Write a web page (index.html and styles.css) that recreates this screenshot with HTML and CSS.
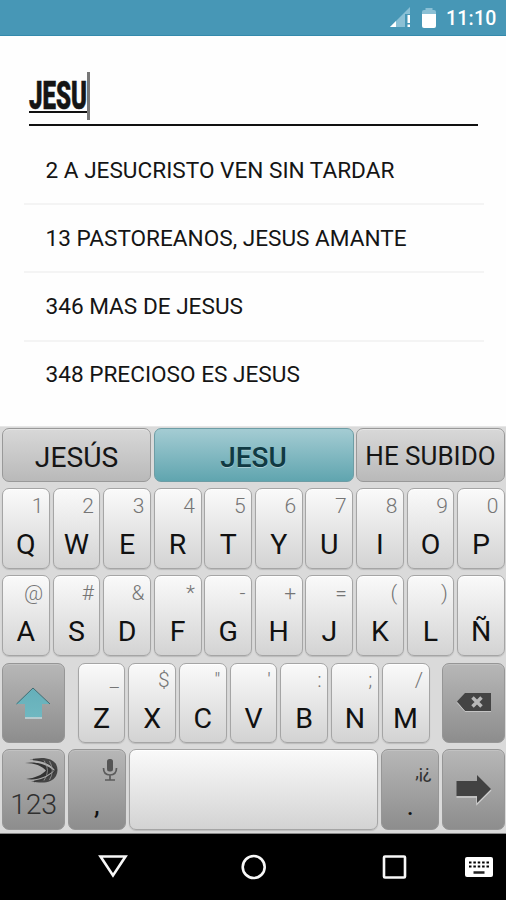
FILE: index.html
```html
<!DOCTYPE html>
<html lang="es">
<head>
<meta charset="utf-8">
<title>Buscar</title>
<link rel="stylesheet" href="styles.css">
</head>
<body>
<header class="status">
  <svg class="signal" width="24" height="22" viewBox="0 0 24 22"><path d="M1 20L21 0V7H16V20Z" fill="#8bc0d5"/><path d="M1 20L7 14V20Z" fill="#fff"/><path d="M18.500 8h2.500v8h-2.500zM18.500 17.500h2.500v2.500h-2.500z" fill="#fff"/></svg>
  <svg class="battery" width="14" height="22" viewBox="0 0 14 22"><path d="M0 5Q0 3 2 3H3.500V1H10.500V3H12Q14 3 14 5V8H0Z" fill="#8bc0d5"/><path d="M0 7H14V19Q14 21 12 21H2Q0 21 0 19Z" fill="#fff"/></svg>
  <span class="clock">11:10</span>
</header>
<main class="page">
  <div class="search"><span class="query"><span class="typed">JESU</span></span><span class="caret"></span></div>
  <ul class="results">
    <li>2 A JESUCRISTO VEN SIN TARDAR</li>
    <li>13 PASTOREANOS, JESUS AMANTE</li>
    <li>346 MAS DE JESUS</li>
    <li>348 PRECIOSO ES JESUS</li>
  </ul>
</main>
<section class="keyboard">
  <div class="suggestions">
    <div class="word">JESÚS</div>
    <div class="word active">JESU</div>
    <div class="word phrase">HE SUBIDO</div>
  </div>
  <div class="row">
    <div class="key"><small>1</small><b>Q</b></div><div class="key"><small>2</small><b>W</b></div><div class="key"><small>3</small><b>E</b></div><div class="key"><small>4</small><b>R</b></div><div class="key"><small>5</small><b>T</b></div><div class="key"><small>6</small><b>Y</b></div><div class="key"><small>7</small><b>U</b></div><div class="key"><small>8</small><b>I</b></div><div class="key"><small>9</small><b>O</b></div><div class="key"><small>0</small><b>P</b></div>
  </div>
  <div class="row">
    <div class="key"><small>@</small><b>A</b></div><div class="key"><small>#</small><b>S</b></div><div class="key"><small>&amp;</small><b>D</b></div><div class="key"><small>*</small><b>F</b></div><div class="key"><small>-</small><b>G</b></div><div class="key"><small>+</small><b>H</b></div><div class="key"><small>=</small><b>J</b></div><div class="key"><small>(</small><b>K</b></div><div class="key"><small>)</small><b>L</b></div><div class="key"><small></small><b>Ñ</b></div>
  </div>
  <div class="row third">
    <div class="key dark wide">
      <svg width="63" height="80" viewBox="0 0 63 80"><defs><linearGradient id="teal" x1="0" y1="0" x2="0" y2="1"><stop offset="0" stop-color="#65afb9"/><stop offset="1" stop-color="#70b8c1"/></linearGradient></defs><path d="M31 25L48 41H40V54.500H23V41H14Z" fill="url(#teal)"/><path d="M14.500 41L31 25L48 41" fill="none" stroke="#456c72" stroke-width="1"/><path d="M23 55H40" stroke="#c6d9dc" stroke-width="1.500"/></svg>
    </div>
    <div class="letters">
      <div class="key"><small>_</small><b>Z</b></div><div class="key"><small>$</small><b>X</b></div><div class="key"><small>"</small><b>C</b></div><div class="key"><small>'</small><b>V</b></div><div class="key"><small>:</small><b>B</b></div><div class="key"><small>;</small><b>N</b></div><div class="key"><small>/</small><b>M</b></div>
    </div>
    <div class="key dark wide">
      <svg width="63" height="80" viewBox="0 0 63 80"><path d="M15 38.500L23 30H49V48H23Z" fill="#444"/><path d="M15 39.500L23 48.500H49" fill="none" stroke="#c4c4c4"/><path d="M30.500 34.500L39.500 43.500M39.500 34.500L30.500 43.500" stroke="#b8b8b8" stroke-width="3.500"/></svg>
    </div>
  </div>
  <div class="row fourth">
    <div class="key dark wide mode">
      <svg width="34" height="27" viewBox="0 0 34 27"><path d="M4 3C17-1 27 1 31 7Q34 13 31 19C27 26 17 27 6 24C15 24 23 22 27 17L30 13L27 9C23 4 14 2 4 3Z" fill="#444"/><path d="M0 6C12 4 22 8 29 13.500C22 19 13 24 1 22C10 21 17 18 21 13.500C17 9 10 6 0 6Z" fill="#333"/><path d="M8 2.500C18 3 26 7 31 13C26 20 18 23 9 24.500" fill="none" stroke="#3a3a3a" stroke-width="1.500"/><path d="M19 3.500Q26 13.500 19 23.500M24.500 4Q30 13.500 24.500 23" fill="none" stroke="#999" stroke-width="0.800"/></svg>
      <b>123</b>
    </div>
    <div class="key dark comma">
      <svg width="16" height="24" viewBox="0 0 16 24"><rect x="5" y="1" width="6" height="12.500" rx="2.500" fill="#555"/><path d="M1.500 10Q1.500 17 8 17Q14.500 17 14.500 10M8 17V22M3 22H13" fill="none" stroke="#5c5c5c" stroke-width="1.700"/></svg>
      <b>,</b>
    </div>
    <div class="key space"></div>
    <div class="key dark dot"><small>,¡¿</small><b>.</b></div>
    <div class="key dark wide">
      <svg width="63" height="80" viewBox="0 0 63 80"><path d="M14.500 48H35V55L49 41" fill="none" stroke="#ccc" stroke-width="1.500"/><path d="M14.500 32H35V26L49 40L35 54V47H14.500Z" fill="#424242"/></svg>
    </div>
  </div>
</section>
<nav class="navbar">
  <svg width="506" height="66" viewBox="0 1 506 66" fill="none" stroke="#f8f8f8" stroke-width="2.600"><path d="M100.500 23.500H125.500L113 42.500Z"/><circle cx="253.700" cy="34" r="11"/><rect x="384" y="23.500" width="21" height="21" rx="1"/><rect x="465" y="24" width="28" height="20" rx="2" fill="#fff" stroke="none"/><path d="M469 29.500H489M469 33.500H489" stroke="#000" stroke-width="2.200" stroke-dasharray="2.500 1.870"/><path d="M473.500 39.500H484.500" stroke="#222" stroke-width="2.500"/></svg>
</nav>
</body>
</html>
```

FILE: styles.css
```css
* { box-sizing: border-box; }
body { margin: 0; width: 506px; height: 900px; overflow: hidden; background: #fefefe; font-family: Roboto, sans-serif; color: #151515; }
.status { height: 36px; background: #4797b6; border-bottom: 1px solid #348aac; display: flex; align-items: center; padding: 1px 11px 0 0; justify-content: flex-end; color: #fff; }
.signal { margin-right: 9px; }
.battery { margin-right: 9px; }
.clock { font-size: 19.500px; font-weight: 500; width: 50px; letter-spacing: 0.2px; white-space: nowrap; padding-left: 1px; }
.page { height: 390px; padding-top: 36px; }
.search { margin: 0 28px 0 29px; height: 54px; border-bottom: 2px solid #111; display: flex; align-items: flex-start; }
.query { width: 59px; height: 41px; border-bottom: 2px solid #111; white-space: nowrap; }
.typed { display: block; width: 100px; font-size: 38.500px; line-height: 47px; font-weight: 900; -webkit-text-stroke: 0.6px #151515; transform: scaleX(0.625); transform-origin: left; }
.caret { width: 3px; height: 48px; background: #777; margin-left: -1px; }
.results { list-style: none; margin: 11px 22px 0 24px; padding: 0; }
.results li { height: 68.200px; padding-left: 21.500px; line-height: 67px; font-size: 22.600px; border-bottom: 2px solid #f4f4f4; white-space: nowrap; }
.results li:last-child { border: 0; line-height: 66px; }
.keyboard { height: 408px; background: #dadada; border-top: 1px solid #e6e6e6; border-bottom: 1px solid #888; padding: 1px 1px 0 2px; }
.suggestions { height: 54px; display: grid; grid-template-columns: 149px 200px 149px; grid-template-rows: 54px; gap: 2.500px; }
.word { border: 1px solid #999; border-radius: 7px; background: linear-gradient(#d8d8d8, #b9b9b9); box-shadow: inset 0 1px #e5e5e5; line-height: 57px; font-size: 28.200px; text-align: center; white-space: nowrap; }
.active { background: linear-gradient(#a4ccd3, #60a5af); box-shadow: none; border-color: #6d9da5; color: #103a43; font-size: 28px; font-weight: 500; text-shadow: 0 1px #a8cdd2; }
.phrase { font-size: 26px; line-height: 54px; }
.row { height: 81px; margin-top: 6.200px; display: grid; grid-template-columns: repeat(10, 1fr); gap: 2.800px; }
.key { border: 1px solid #a5a5a5; border-radius: 7px; background: linear-gradient(#fafafa, #d3d3d3); box-shadow: inset 0 1px #fff, 0 1px 1px #bbb; display: flex; flex-direction: column; min-width: 0; }
.key small { height: 33px; padding: 0 5.500px 0 0; text-align: right; font-size: 21px; line-height: 34px; color: #757575; font-weight: 300; }
.key b { height: 44px; line-height: 45px; font-size: 28.500px; font-weight: 400; text-align: center; color: #111; }
.key > svg { margin: -1px; }
.third { grid-template-columns: 63px 352px 63px; justify-content: space-between; }
.third, .fourth { height: 80.500px; }
.letters { display: grid; grid-template-columns: repeat(7, 1fr); gap: 2.800px; }
.letters .key b { margin-top: -1px; }
.letters .key small { line-height: 32px; }
.dark { background: linear-gradient(#b7b7b7, #8d8d8d); border-color: #969696; box-shadow: inset 0 1px #c2c2c2; }
.fourth { grid-template-columns: 63px 58px 1fr 58px 63px; }
.mode > svg { margin: 7px 0 0 22px; }
.mode b { color: #303030; margin-top: -2px; letter-spacing: -0.3px; font-weight: 300; }
.comma > svg { margin: 8px 7px 0 auto; }
.dot small { color: #333; padding-right: 7px; line-height: 43px; font-size: 19px; letter-spacing: -0.5px; font-weight: 400; }
.navbar { height: 66px; background: #000; }
.navbar svg { display: block; }
```
